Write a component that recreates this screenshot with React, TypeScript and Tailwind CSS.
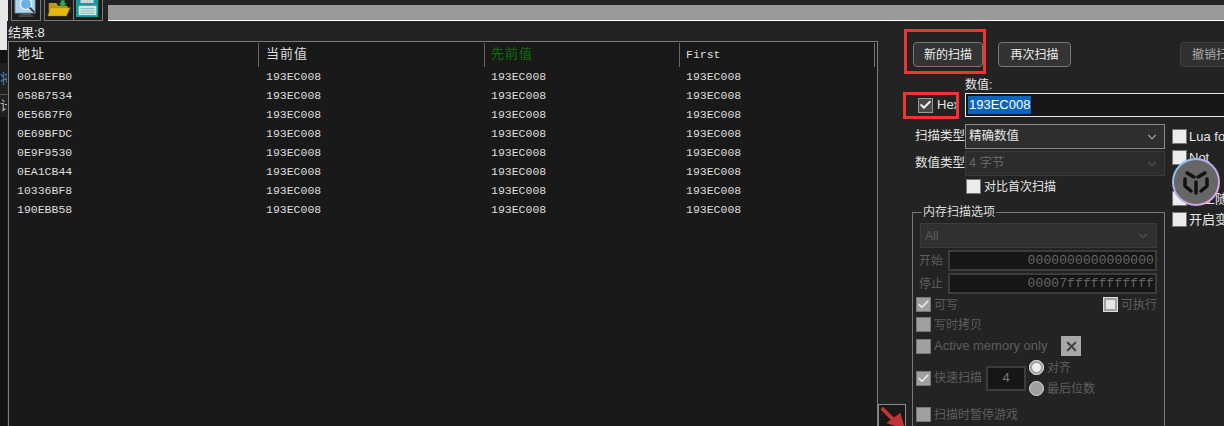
import { Check, ChevronDown, X } from "lucide-react";

const rows = ["0018EFB0", "058B7534", "0E56B7F0", "0E69BFDC", "0E9F9530", "0EA1CB44", "10336BF8", "190EBB58"];

const sans = "font-['Liberation_Sans','Noto_Sans_CJK_SC',sans-serif]";
const mono = "font-['Liberation_Mono','Noto_Sans_CJK_SC',monospace]";

function Box({ checked, dim, className = "" }: { checked?: boolean; dim?: boolean; className?: string }) {
    return (
        <span
            className={`flex w-[15px] h-[15px] shrink-0 items-center justify-center border border-[#777] ${dim ? "bg-[#a0a0a0]" : "bg-[#ececec]"} ${className}`}
        >
            {checked && <Check size={15} strokeWidth={3} className={dim ? "text-[#eee]" : "text-[#333]"} />}
        </span>
    );
}

function ToolIcon({ children, className = "" }: { children: React.ReactNode; className?: string }) {
    return (
        <div className={`w-[30px] h-[21px] border-x border-b border-[#777] overflow-hidden bg-[#1c1c1c] ${className}`}>
            {children}
        </div>
    );
}

function TopBar() {
    return (
        <div className="flex h-[21px] shrink-0 items-start">
            <div className="w-[8px] h-full bg-[#e8e8e8]" />
            <ToolIcon className="ml-[3px]">
                <svg viewBox="0 0 30 21" className="w-full h-full">
                    <rect x="3" y="-4" width="22" height="18" fill="#a8d4f0" stroke="#555" />
                    <circle cx="15" cy="4" r="6" fill="#6ab0e0" stroke="#dfeefa" strokeWidth="1.5" />
                    <path d="M19 8l5 5" stroke="#333" strokeWidth="2" />
                    <rect x="10" y="14" width="10" height="2" fill="#555" />
                    <rect x="7" y="16" width="16" height="2" fill="#444" />
                </svg>
            </ToolIcon>
            <ToolIcon className="ml-[3px]">
                <svg viewBox="0 0 30 21" className="w-full h-full">
                    <path d="M4 3h8l2 3h10v6H4z" fill="#c09a20" />
                    <path d="M6 8h21l-4 9H3z" fill="#e6b80c" stroke="#9a7a10" strokeWidth="0.5" />
                    <path d="M17 0h4v3h2l-4 5-4-5h2z" fill="#2aa84a" />
                </svg>
            </ToolIcon>
            <ToolIcon className="-ml-px">
                <svg viewBox="0 0 30 21" className="w-full h-full">
                    <rect x="2" y="-2" width="24" height="20" fill="#0f9d9a" />
                    <rect x="7" y="-2" width="14" height="5" fill="#c9d6d6" />
                    <rect x="5" y="6" width="19" height="10" fill="#cfe9e4" />
                    <path d="M7 9h15M7 11.500h15M7 14h15" stroke="#7fb8b0" />
                </svg>
            </ToolIcon>
            <div className="ml-[5px] flex-1 relative h-[21px]">
                <div className={`absolute left-[469px] top-[-10px] whitespace-nowrap text-[#e8e8e8] text-[13px] leading-[12px] ${sans}`}>
                    0000 FOFO Counter Strike
                </div>
                <div className="mt-[5px] h-[16px] bg-[#9a9a9a] border-b border-white" />
            </div>
        </div>
    );
}

function ResultsTable() {
    return (
        <div className={`flex-1 border-t border-x border-[#7d7d7d] bg-[#191919] overflow-hidden ${mono} text-[11.5px] text-[#dedede]`}>
            <div className="flex h-[25px] pt-[1px] pr-[2px]">
                <div className="w-[249px] pl-[8px] flex items-center text-[13px] tracking-[1px] text-[#e8e8e8]">地址</div>
                <div className="w-[226px] pl-[7px] flex items-center text-[13px] tracking-[1px] border-l border-[#666]">当前值</div>
                <div className="w-[195px] pl-[6px] flex items-center text-[13px] tracking-[1px] border-l border-[#666] text-[#0a700a]">先前值</div>
                <div className="flex-1 pl-[6px] flex items-center border-x border-[#666] border-r-[#777]">First</div>
            </div>
            <div>
                {rows.map((addr) => (
                    <div key={addr} className="flex h-[19px] items-center">
                        <div className="w-[249px] pl-[8px]">{addr}</div>
                        <div className="w-[226px] pl-[8px]">193EC008</div>
                        <div className="w-[195px] pl-[7px]">193EC008</div>
                        <div className="pl-[7px]">193EC008</div>
                    </div>
                ))}
            </div>
        </div>
    );
}

function MemoryOptions() {
    return (
        <fieldset className="w-[253px] ml-[34px] mt-[12px] border border-[#777] px-[7px] pt-[5px] h-[240px] text-[12px] text-[#5e5e5e]">
            <legend className="ml-[2px] px-[1px] text-[12px] leading-[12px] text-[#ddd]">内存扫描选项</legend>
            <div className="flex h-[25px] items-center justify-between border border-[#3c3c3c] bg-[#303030] pl-[4px] pr-[6px]">
                All
                <ChevronDown size={14} className="text-[#555]" />
            </div>
            <div className="mt-[2px] flex flex-col gap-[2px]">
                {[["开始", "0000000000000000"], ["停止", "00007fffffffffff"]].map(([label, value]) => (
                    <div key={label} className="flex items-center">
                        <span className="w-[29px] -ml-px pl-0">{label}</span>
                        <span className={`flex-1 h-[21px] border-2 border-[#3c3c3c] bg-[#161616] text-right pr-[1px] leading-[17px] text-[13px] tracking-[0.1px] text-[#666] ${mono}`}>
                            {value}
                        </span>
                    </div>
                ))}
            </div>
            <div className="mt-[3px] -ml-[4px] flex h-[15px] items-center justify-between">
                <span className="flex items-center gap-[3px]"><Box checked dim />可写</span>
                <span className="flex items-center gap-[3px]">
                    <span className="w-[15px] h-[15px] border-[3px] border-[#a0a0a0] outline outline-[#ddd] -outline-offset-1 bg-[#e6e6e6]" />
                    可执行
                </span>
            </div>
            <div className="mt-[5px] -ml-[4px] flex h-[15px] items-center gap-[3px]"><Box dim />写时拷贝</div>
            <div className="mt-[4px] -ml-[4px] flex h-[20px] items-center gap-[3px] text-[13px]">
                <Box dim />Active memory only
                <span className="ml-[11px] flex w-[20px] h-[20px] items-center justify-center bg-[#a8a8a8]">
                    <X size={15} strokeWidth={3.5} className="text-[#444]" />
                </span>
            </div>
            <div className="mt-[4px] -ml-[4px] flex h-[36px] items-center">
                <span className="flex items-center gap-[3px]"><Box checked dim />快速扫描</span>
                <span className={`ml-[4px] flex w-[40px] h-[25px] items-center justify-center border-2 border-[#3c3c3c] bg-[#161616] ${sans} text-[#777] text-[13px]`}>4</span>
                <div className="ml-[3px] flex flex-col gap-[6px]">
                    <span className="flex h-[15px] items-center gap-[3px]">
                        <span className="w-[15px] h-[15px] rounded-full border-[3px] border-[#a0a0a0] bg-[#eee] outline outline-[#ddd] -outline-offset-1" />对齐
                    </span>
                    <span className="flex h-[15px] items-center gap-[3px]">
                        <span className="w-[15px] h-[15px] rounded-full border border-[#ddd] bg-[#a0a0a0]" />最后位数
                    </span>
                </div>
            </div>
            <div className="mt-[11px] -ml-[4px] flex h-[15px] items-center gap-[3px]"><Box dim />扫描时暂停游戏</div>
        </fieldset>
    );
}

function ScanPanel() {
    return (
        <div className={`w-[346px] shrink-0 relative ${sans} text-[12px] text-[#e6e6e6]`}>
            <div className="flex h-[25px] mt-[21px] items-center pl-[35px] text-[12px]">
                <div className="relative">
                    <button className="block w-[70px] h-[25px] rounded-[4px] border border-[#777] bg-[#333] text-[#eee]">新的扫描</button>
                    <div className="absolute left-[-9px] top-[-13px] w-[82px] h-[45px] border-[3px] border-[#f03434]" />
                </div>
                <button className="ml-[15px] w-[73px] h-[25px] rounded-[4px] border border-[#777] bg-[#333] text-[#eee]">再次扫描</button>
                <button className="ml-[109px] w-[44px] h-[25px] rounded-l-[4px] border border-r-0 border-[#3e3e3e] bg-[#303030] text-[#aaa] whitespace-nowrap overflow-hidden text-left pl-[11px]">撤销扫描</button>
            </div>
            <div className="mt-[12px] ml-[87px] h-[13px] leading-[13px] text-[12px]">数值:</div>
            <div className="flex items-center h-[24px] mt-[1px]">
                <div className="relative flex w-[87px] items-center pl-[40px]">
                    <span className="flex w-[15px] h-[15px] shrink-0 items-center justify-center border border-[#999] bg-[#4a4a4a]">
                        <Check size={16} strokeWidth={3.5} className="text-[#f4f4f4]" />
                    </span>
                    <span className="ml-[4px] text-[13px] w-[21px] overflow-hidden">Hex</span>
                    <div className="absolute left-[25px] top-[-3px] w-[56px] h-[27px] border-[3px] border-[#f03434]" />
                </div>
                <div className="flex-1 h-[24px] border border-[#e8e8e8] border-r-0 bg-[#161616] flex items-center pl-[2px] text-[13px]">
                    <span className="bg-[#0a64c0] text-white h-[18px] leading-[18px] px-px">193EC008</span>
                </div>
            </div>

            <div className="flex">
                <div className="w-[287px] shrink-0">
                    <div className="mt-[7px] flex items-center h-[25px] pl-[37px] text-[12.5px]">
                        <span className="w-[50px] shrink-0 whitespace-nowrap">扫描类型</span>
                        <div className="flex flex-1 h-[25px] items-center justify-between border border-[#8a8a8a] bg-[#2e2e2e] pl-[3px] pr-[5px]">
                            精确数值
                            <ChevronDown size={14} className="text-[#999]" />
                        </div>
                    </div>
                    <div className="mt-[2px] flex items-center h-[25px] pl-[37px] text-[12.5px]">
                        <span className="w-[50px] shrink-0 whitespace-nowrap">数值类型</span>
                        <div className="flex flex-1 h-[25px] items-center justify-between border border-[#3c3c3c] bg-[#2c2c2c] pl-[3px] pr-[5px] text-[#666]">
                            4 字节
                            <ChevronDown size={14} className="text-[#555]" />
                        </div>
                    </div>
                    <div className="mt-[3px] ml-[88px] flex items-center gap-[3px] h-[15px] text-[12px]">
                        <Box />对比首次扫描
                    </div>
                    <MemoryOptions />
                </div>
                <div className="ml-[7px] pt-[12px] text-[13px] whitespace-nowrap">
                    <div className="flex items-center gap-[2px] h-[15px]"><Box />Lua fo</div>
                    <div className="mt-[6px] flex items-center gap-[2px] h-[15px]"><Box />Not</div>
                    <div className="mt-[26px] flex items-center gap-[2px] h-[15px]"><Box />禁止随</div>
                    <div className="mt-[6px] flex items-center gap-[2px] h-[15px]"><Box />开启变</div>
                </div>
            </div>

            {/* floating assistant badge */}
            <div className="absolute left-[294px] top-[137px] w-[48px] h-[48px] rounded-full bg-gradient-to-br from-[#6fd0e8] via-[#b8a8e8] to-[#f0a0d8] p-[2px]">
                <div className="w-full h-full rounded-full bg-[#666] flex items-center justify-center">
                    <svg viewBox="0 0 32 32" className="w-[32px] h-[32px]" fill="none" stroke="#111" strokeWidth="3.500" strokeLinecap="round" strokeLinejoin="round">
                        <path d="M7 7l7 4M25 7l-7 4M16 16v11M5 13v7l6 5M27 13v7l-6 5" />
                    </svg>
                </div>
            </div>

            {/* red arrow button, cut off by the window edge */}
            <div className="absolute left-0 bottom-0 w-[28px] h-[22px] border border-[#8a8a8a] border-b-0 bg-[#191919] overflow-hidden">
                <svg viewBox="0 0 28 22" className="w-full h-full">
                    <path d="M3 3l14 14" stroke="#c03434" strokeWidth="4" />
                    <path d="M28 26l-5-18L8 19z" fill="#c03434" />
                </svg>
            </div>
        </div>
    );
}

function LeftStrip() {
    return (
        <div className="w-[8px] shrink-0 pr-px bg-[#232323]">
            <div className={`h-full flex flex-col bg-[#121212] overflow-hidden text-[13px] ${sans}`}>
                <div className="h-[29px] shrink-0 bg-[#e8e8e8]" />
                <div className="h-[13px] shrink-0" />
                <div className="h-[32px] shrink-0 bg-[#202020] border-b border-[#555] flex items-center justify-end text-[#4a8ab8] whitespace-nowrap">
                    <span className="-mr-[6px]">将</span>
                </div>
                <div className="h-[22px] shrink-0 bg-[#202020] flex items-center justify-end text-[#b8b8b8] whitespace-nowrap">
                    <span className="-mr-[6px]">计</span>
                </div>
            </div>
        </div>
    );
}

export default function App() {
    return (
        <div className="w-[1224px] h-[426px] overflow-hidden flex flex-col bg-[#232323]">
            <TopBar />
            <div className="flex flex-1 min-h-0">
                <div className="flex flex-1 min-w-0">
                    <LeftStrip />
                    <div className="flex flex-1 flex-col min-w-0">
                        <div className={`h-[20px] pt-[4px] flex items-center text-[13px] text-[#e6e6e6] ${sans} whitespace-nowrap`}>结果:8</div>
                        <ResultsTable />
                    </div>
                </div>
                <ScanPanel />
            </div>
        </div>
    );
}
